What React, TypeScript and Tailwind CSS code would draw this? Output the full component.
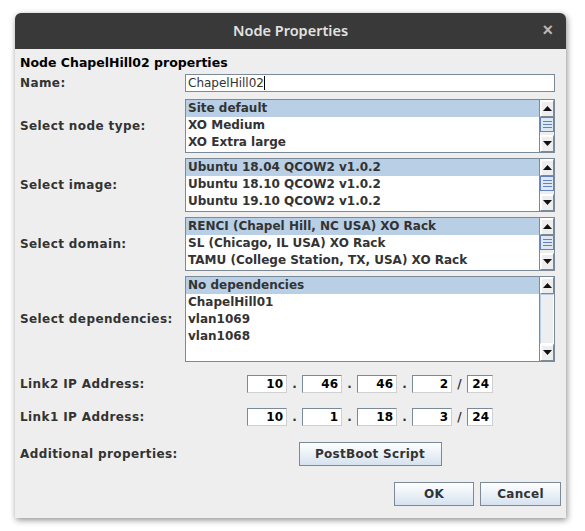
import React from "react";

const font = { fontFamily: '"DejaVu Sans", "Liberation Sans", sans-serif' };

function Arrow({ up }: { up: boolean }) {
  return (
    <div className="h-[17px] w-full flex items-center justify-center bg-[#eeeeee] border border-[#7a8a99] border-l-white border-t-white shadow-[inset_1px_1px_0_#ffffff]">
      <svg width="9" height="5" viewBox="0 0 9 5">
        {up ? <polygon points="0,5 9,5 4.5,0" fill="#111" /> : <polygon points="0,0 9,0 4.5,5" fill="#111" />}
      </svg>
    </div>
  );
}

function ScrollBar({ thumb }: { thumb: boolean }) {
  return (
    <div className="w-[15px] flex flex-col bg-[#eeeeee] border-l border-[#7a8a99]">
      <Arrow up />
      <div className="flex-1 flex flex-col">
        {thumb ? (
          <>
            <div className="h-[15px] border border-[#6382bf] bg-[#dde8f3] flex flex-col items-center justify-center gap-[2px]">
              <div className="w-[9px] h-px bg-[#6382bf]" />
              <div className="w-[9px] h-px bg-[#6382bf]" />
              <div className="w-[9px] h-px bg-[#6382bf]" />
            </div>
            <div className="flex-1 bg-[#eeeeee]" />
          </>
        ) : (
          <div className="flex-1 border border-[#b8cfe5] border-r-white border-b-white bg-[#eeeeee]" />
        )}
      </div>
      <Arrow up={false} />
    </div>
  );
}

function ListBox({ items, h, thumb }: { items: string[]; h: string; thumb: boolean }) {
  return (
    <div className={`flex border border-[#7a8a99] bg-white ${h}`}>
      <div className="flex-1 flex flex-col">
        {items.map((it, i) => (
          <div
            key={i}
            className={`h-[17px] leading-[17px] pl-[2px] text-[12px] font-bold text-[#333333] whitespace-nowrap ${i === 0 ? "bg-[#b8cfe5]" : ""}`}
          >
            {it}
          </div>
        ))}
      </div>
      <ScrollBar thumb={thumb} />
    </div>
  );
}

function IpBox({ v, w }: { v: string; w: string }) {
  return (
    <div className={`${w} h-[18px] bg-white border border-[#7a8a99] border-r-[#d0d0d0] border-b-[#d0d0d0] text-right pr-[3px] text-[12px] font-bold text-black leading-[16px]`}>
      {v}
    </div>
  );
}

function IpRow({ vals }: { vals: string[] }) {
  return (
    <div className="flex items-center justify-center">
      <IpBox v={vals[0]} w="w-[40px]" />
      <span className="w-[15px] text-center text-[12px] font-bold text-[#333]">.</span>
      <IpBox v={vals[1]} w="w-[40px]" />
      <span className="w-[15px] text-center text-[12px] font-bold text-[#333]">.</span>
      <IpBox v={vals[2]} w="w-[40px]" />
      <span className="w-[15px] text-center text-[12px] font-bold text-[#333]">.</span>
      <IpBox v={vals[3]} w="w-[40px]" />
      <span className="w-[15px] text-center text-[12px] font-bold text-[#333]">/</span>
      <IpBox v={vals[4]} w="w-[26px]" />
    </div>
  );
}

function Btn({ label, w }: { label: string; w: string }) {
  return (
    <div
      className={`${w} h-[24px] flex items-center justify-center border border-[#7a8a99] bg-gradient-to-b from-[#ffffff] to-[#d6e2ef] text-[12px] font-bold text-[#333333] tracking-[0.3px]`}
    >
      {label}
    </div>
  );
}

function Label({ children }: { children: React.ReactNode }) {
  return <div className="w-[165px] shrink-0 text-[12px] font-bold text-[#333333] whitespace-nowrap tracking-[0.4px]">{children}</div>;
}

export default function App() {
  return (
    <div className="w-[585px] h-[531px] bg-white overflow-hidden" style={font}>
      <div className="ml-[15px] mt-[13px] w-[551px] h-[505px] rounded-t-[6px] bg-[#eeeeee] shadow-[1px_2px_6px_rgba(0,0,0,0.45)] flex flex-col">
        <div className="h-[36px] rounded-t-[6px] bg-[#393939] flex items-center relative">
          <div
            className="flex-1 text-center text-[14.5px] font-semibold text-[#e2e2e2]"
            style={{ fontFamily: '"Noto Sans", "Open Sans", sans-serif' }}
          >
            Node Properties
          </div>
          <div className="absolute right-[13px] top-[8px] text-[18px] leading-[18px] font-bold text-[#b8b8b8]" style={{ fontFamily: '"Liberation Sans", sans-serif' }}>
            ×
          </div>
        </div>
        <div className="flex flex-col pl-[5px] pr-[11px]">
          <div className="mt-[5px] h-[17px] leading-[17px] text-[12.5px] font-bold text-black">Node ChapelHill02 properties</div>
          <div className="flex items-center mt-[3px]">
            <Label>Name:</Label>
            <div className="flex-1 h-[18px] bg-white border border-[#7a8a99] text-[12px] leading-[16px] pl-[2px] text-[#333] flex items-center">
              ChapelHill02<span className="inline-block w-px h-[14px] bg-black" />
            </div>
          </div>
          <div className="flex items-center mt-[7px]">
            <Label>Select node type:</Label>
            <div className="flex-1">
              <ListBox items={["Site default", "XO Medium", "XO Extra large"]} h="h-[54px]" thumb />
            </div>
          </div>
          <div className="flex items-center mt-[5px]">
            <Label>Select image:</Label>
            <div className="flex-1">
              <ListBox items={["Ubuntu 18.04 QCOW2 v1.0.2", "Ubuntu 18.10 QCOW2 v1.0.2", "Ubuntu 19.10 QCOW2 v1.0.2"]} h="h-[54px]" thumb />
            </div>
          </div>
          <div className="flex items-center mt-[5px]">
            <Label>Select domain:</Label>
            <div className="flex-1">
              <ListBox
                items={["RENCI (Chapel Hill, NC USA) XO Rack", "SL (Chicago, IL USA) XO Rack", "TAMU (College Station, TX, USA) XO Rack"]}
                h="h-[54px]"
                thumb
              />
            </div>
          </div>
          <div className="flex items-center mt-[5px]">
            <Label>Select dependencies:</Label>
            <div className="flex-1">
              <ListBox items={["No dependencies", "ChapelHill01", "vlan1069", "vlan1068"]} h="h-[86px]" thumb={false} />
            </div>
          </div>
          <div className="flex items-center mt-[13px]">
            <Label>Link2 IP Address:</Label>
            <div className="flex-1">
              <IpRow vals={["10", "46", "46", "2", "24"]} />
            </div>
          </div>
          <div className="flex items-center mt-[15px]">
            <Label>Link1 IP Address:</Label>
            <div className="flex-1">
              <IpRow vals={["10", "1", "18", "3", "24"]} />
            </div>
          </div>
          <div className="flex items-center mt-[16px]">
            <Label>Additional properties:</Label>
            <div className="flex-1 flex justify-center">
              <Btn label="PostBoot Script" w="w-[143px]" />
            </div>
          </div>
          <div className="flex justify-end gap-[6px] mt-[16px] -mr-[6px]">
            <Btn label="OK" w="w-[80px]" />
            <Btn label="Cancel" w="w-[81px]" />
          </div>
        </div>
      </div>
    </div>
  );
}
